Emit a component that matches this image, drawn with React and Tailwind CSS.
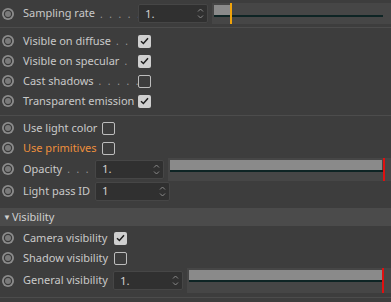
import React from "react";

const FONT = { fontFamily: '"Noto Sans", "Open Sans", sans-serif' };

// radio-ish animate button on the left of each row
function Dot() {
  return (
    <svg width="14" height="14" viewBox="0 0 14 14" className="shrink-0">
      <circle cx="7" cy="7" r="6" fill="#8c8c8c" />
      <circle cx="7" cy="7" r="4.2" fill="#3a3a3a" />
      <circle cx="7" cy="7" r="3" fill="#7a7a7a" />
    </svg>
  );
}

function Check({ on }) {
  if (!on)
    return <div className="w-[13px] h-[13px] rounded-[2px] border border-[#bdbdbd] shrink-0" />;
  return (
    <div className="w-[13px] h-[13px] rounded-[2px] bg-[#cfcfcf] flex items-center justify-center shrink-0">
      <svg width="9" height="8" viewBox="0 0 9 8">
        <path d="M1 4.2 L3.4 6.5 L8 1.2" stroke="#1e1e1e" strokeWidth="1.5" fill="none" />
      </svg>
    </div>
  );
}

function Field({ value, w }) {
  return (
    <div
      className="h-[19px] bg-[#303030] border border-[#464646] rounded-[2px] flex items-center justify-between pl-[6px] pr-[3px] shrink-0"
      style={{ width: w }}
    >
      <span className="text-[11.5px] text-[#d0d0d0]">{value}</span>
      <svg width="7" height="13" viewBox="0 0 7 13">
        <path d="M1 4.5 L3.5 2 L6 4.5 M1 8.5 L3.5 11 L6 8.5" stroke="#8a8a8a" strokeWidth="1" fill="none" />
      </svg>
    </div>
  );
}

function Slider({ fill, marker, h = 23 }) {
  return (
    <div className="flex-1 bg-[#464646] relative" style={{ height: h }}>
      <div className="absolute left-[2px] right-[8px] top-[2px] h-[12px] flex flex-col">
        <div className="h-[10px] bg-[#8a8a8a]" style={{ width: fill }} />
        <div className="h-[2px] bg-[#0e2424]" />
      </div>
      <div className="absolute top-0 bottom-0 w-[2px]" style={{ left: marker.left, background: marker.color }} />
    </div>
  );
}

function Label({ text, dots, orange, w }) {
  return (
    <div className="flex items-end shrink-0" style={{ width: w }}>
      <span className={`text-[11px] whitespace-nowrap ${orange ? "text-[#ee8f3c]" : "text-[#c9c9c9]"}`}>{text}</span>
      {dots ? (
        <span className="text-[10px] text-[#9a9a9a] whitespace-nowrap ml-[5px] tracking-[2px] leading-[15px]">{dots}</span>
      ) : null}
    </div>
  );
}

function Row({ h = 20, children }) {
  return (
    <div className="flex items-center pl-[1px]" style={{ height: h }}>
      <Dot />
      <div className="w-[8px]" />
      {children}
    </div>
  );
}

export default function App() {
  return (
    <div className="w-[391px] h-[302px] bg-[#3d3d3d] overflow-hidden" style={FONT}>
      {/* sampling */}
      <div className="pt-[3px] pb-[3px] border-b border-[#4c4c4c]">
        <Row h={21}>
          <Label text="Sampling rate" dots=". . . . ." w={115} />
          <Field value="1." w={70} />
          <div className="w-[4px]" />
          <Slider fill={16} marker={{ left: 18, color: "#f0a30a" }} h={21} />
        </Row>
      </div>

      <div className="pt-[3px] pb-[4px] border-b border-[#4c4c4c]">
        <Row>
          <Label text="Visible on diffuse" dots=". ." w={115} />
          <Check on />
        </Row>
        <Row>
          <Label text="Visible on specular" dots="." w={115} />
          <Check on />
        </Row>
        <Row>
          <Label text="Cast shadows" dots=". . . . ." w={115} />
          <Check />
        </Row>
        <Row>
          <Label text="Transparent emission" w={115} />
          <Check on />
        </Row>
      </div>

      <div className="pt-[2px] mb-[6px]">
        <Row>
          <Label text="Use light color" w={79} />
          <Check />
        </Row>
        <Row>
          <Label text="Use primitives" orange w={79} />
          <Check />
        </Row>
        <Row h={22}>
          <Label text="Opacity" dots=". . ." w={72} />
          <Field value="1." w={69} />
          <div className="w-[4px]" />
          <Slider fill={212} marker={{ left: 215, color: "#e01010" }} h={23} />
        </Row>
        <Row h={22}>
          <Label text="Light pass ID" w={72} />
          <Field value="1" w={75} />
        </Row>
      </div>

      <div className="h-[18px] bg-[#4b4b4b] flex items-center pl-[3px]">
        <span className="text-[8px] text-[#cfcfcf] mr-[1px]">▼</span>
        <span className="text-[11px] text-[#cfcfcf]">Visibility</span>
      </div>

      <div className="pt-[2px] pb-[4px] border-b border-[#4c4c4c]">
        <Row>
          <Label text="Camera visibility" w={91} />
          <Check on />
        </Row>
        <Row>
          <Label text="Shadow visibility" w={91} />
          <Check />
        </Row>
        <Row h={25}>
          <Label text="General visibility" w={90} />
          <Field value="1." w={70} />
          <div className="w-[4px]" />
          <Slider fill={193} marker={{ left: 195, color: "#e01010" }} h={25} />
        </Row>
      </div>
    </div>
  );
}
